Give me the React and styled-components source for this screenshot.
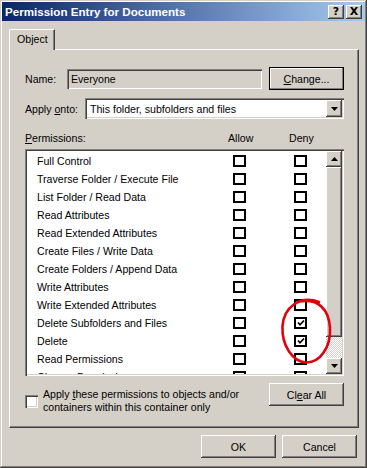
import styled, { createGlobalStyle } from 'styled-components';

const GlobalStyle = createGlobalStyle`
    html, body {
        margin: 0;
        padding: 0;
        background: #d4d0c8;
    }
    body {
        font-family: "Liberation Sans", Arial, sans-serif;
        font-size: 10.6px;
        color: #000;
    }
`;

const permissions = [
    { name: 'Full Control' },
    { name: 'Traverse Folder / Execute File' },
    { name: 'List Folder / Read Data' },
    { name: 'Read Attributes' },
    { name: 'Read Extended Attributes' },
    { name: 'Create Files / Write Data' },
    { name: 'Create Folders / Append Data' },
    { name: 'Write Attributes' },
    { name: 'Write Extended Attributes' },
    { name: 'Delete Subfolders and Files', deny: true },
    { name: 'Delete', deny: true },
    { name: 'Read Permissions' },
    { name: 'Change Permissions' },
];

const CheckMark = () => (
    <svg width="8" height="8" viewBox="0 0 8 8">
        <polyline points="1,3.5 3,5.8 7,1.5" fill="none" stroke="#000" strokeWidth="1.7" />
    </svg>
);

const Arrow = ({ down }) => (
    <svg width="7" height="4" viewBox="0 0 7 4">
        <polygon points={down ? '0,0 7,0 3.5,4' : '0,4 7,4 3.5,0'} fill="#000" />
    </svg>
);

const App = () => {
    return (
        <Window>
            <GlobalStyle />
            <TitleBar>
                <Title>Permission Entry for Documents</Title>
                <TitleButton>?</TitleButton>
                <TitleButton>X</TitleButton>
            </TitleBar>
            <Body>
                <TabStrip>
                    <Tab>Object</Tab>
                </TabStrip>
                <Panel>
                    <FieldRow>
                        <Label $width={42}>Name:</Label>
                        <ReadOnlyField>Everyone</ReadOnlyField>
                        <Button $default>
                            <u>C</u>hange...
                        </Button>
                    </FieldRow>
                    <SelectRow>
                        <Label $width={60}>
                            Apply <u>o</u>nto:
                        </Label>
                        <Select>
                            <SelectText>This folder, subfolders and files</SelectText>
                            <DropButton>
                                <Arrow down />
                            </DropButton>
                        </Select>
                    </SelectRow>
                    <HeaderRow>
                        <span>
                            <u>P</u>ermissions:
                        </span>
                        <ColumnTitle>Allow</ColumnTitle>
                        <span />
                        <ColumnTitle>Deny</ColumnTitle>
                    </HeaderRow>
                    <ListBox>
                        <Rows>
                            {permissions.map((p) => (
                                <Row key={p.name}>
                                    <span>{p.name}</span>
                                    <Box>{p.allow && <CheckMark />}</Box>
                                    <Box>{p.deny && <CheckMark />}</Box>
                                </Row>
                            ))}
                        </Rows>
                        <ScrollBar>
                            <ScrollButton>
                                <Arrow />
                            </ScrollButton>
                            <Thumb />
                            <Track />
                            <ScrollButton>
                                <Arrow down />
                            </ScrollButton>
                        </ScrollBar>
                    </ListBox>
                    <BottomRow>
                        <SunkenCheck />
                        <CheckText>
                            Apply <u>t</u>hese permissions to objects and/or
                            <br />
                            containers within this container only
                        </CheckText>
                        <Button>
                            Cl<u>e</u>ar All
                        </Button>
                    </BottomRow>
                </Panel>
                <Footer>
                    <Button>OK</Button>
                    <Button>Cancel</Button>
                </Footer>
            </Body>
            <Marker width="367" height="468" viewBox="0 0 367 468">
                <path
                    d="M 319 302 C 300 295, 284 307, 282.5 326 C 281.5 346, 293 362, 306 362.5 C 320 363, 331 347, 330 328 C 329 310, 319 298, 299 301.5"
                    fill="none"
                    stroke="#e4000a"
                    strokeWidth="2.6"
                    strokeLinecap="round"
                />
            </Marker>
        </Window>
    );
};

const raised = `
    box-shadow: inset -1px -1px #404040, inset 1px 1px #ffffff, inset -2px -2px #808080;
`;

const sunken = `
    box-shadow: inset 1px 1px #808080, inset 2px 2px #404040, inset -1px -1px #ffffff, inset -2px -2px #d4d0c8;
`;

const Window = styled.div`
    position: relative;
    width: 367px;
    height: 468px;
    box-sizing: border-box;
    padding: 2px;
    background: #d4d0c8;
    display: flex;
    flex-direction: column;
    box-shadow: inset -1px -1px #404040, inset 1px 1px #d4d0c8, inset -2px -2px #808080, inset 2px 2px #ffffff;
`;

const TitleBar = styled.div`
    height: 19px;
    display: flex;
    align-items: center;
    gap: 2px;
    padding: 0 3px 0 3px;
    background: linear-gradient(to right, #0a246a, #a6caf0);
`;

const Title = styled.div`
    flex: 1;
    color: #fff;
    font-weight: bold;
    font-size: 11.6px;
`;

const TitleButton = styled.div`
    width: 16px;
    height: 14px;
    background: #d4d0c8;
    ${raised}
    display: flex;
    align-items: center;
    justify-content: center;
    font-family: "DejaVu Sans", sans-serif;
    font-weight: bold;
    font-size: 11px;
    line-height: 1;
`;

const Body = styled.div`
    flex: 1;
    display: flex;
    flex-direction: column;
    padding: 8px 6px 0 7px;
`;

const TabStrip = styled.div`
    display: flex;
    height: 20px;
`;

const Tab = styled.div`
    position: relative;
    z-index: 1;
    width: 46px;
    height: 21px;
    box-sizing: border-box;
    padding: 0 0 2px 7px;
    display: flex;
    align-items: center;
    background: #d4d0c8;
    border-top: 1px solid #fff;
    border-left: 1px solid #fff;
    border-right: 1px solid #404040;
    border-top-left-radius: 2px;
    box-shadow: inset -1px 0 #808080;
`;

const Panel = styled.div`
    height: 379px;
    box-sizing: border-box;
    border: 1px solid;
    border-color: #fff #404040 #404040 #fff;
    box-shadow: inset -1px -1px #808080;
    padding: 17px 14px 0 15px;
    display: flex;
    flex-direction: column;
`;

const FieldRow = styled.div`
    display: flex;
    align-items: center;
    height: 23px;
`;

const Label = styled.div`
    width: ${(p) => p.$width}px;
    flex: none;
`;

const ReadOnlyField = styled.div`
    flex: 1;
    height: 20px;
    margin-right: 7px;
    padding-left: 4px;
    display: flex;
    align-items: center;
    background: #d4d0c8;
    ${sunken}
`;

const Button = styled.div`
    width: 75px;
    height: 23px;
    flex: none;
    box-sizing: border-box;
    display: flex;
    align-items: center;
    justify-content: center;
    background: #d4d0c8;
    ${(p) =>
        p.$default
            ? 'border: 1px solid #000; box-shadow: inset -1px -1px #808080, inset 1px 1px #ffffff;'
            : raised}
`;

const SelectRow = styled.div`
    display: flex;
    align-items: center;
    margin-top: 8px;
    height: 21px;
`;

const Select = styled.div`
    flex: 1;
    height: 21px;
    box-sizing: border-box;
    padding: 2px;
    display: flex;
    align-items: center;
    background: #fff;
    ${sunken}
`;

const SelectText = styled.div`
    flex: 1;
    padding-left: 3px;
`;

const DropButton = styled.div`
    width: 16px;
    height: 17px;
    display: flex;
    align-items: center;
    justify-content: center;
    background: #d4d0c8;
    ${raised}
`;

const HeaderRow = styled.div`
    display: grid;
    grid-template-columns: 203px 24px 37px 24px;
    align-items: center;
    margin-top: 12px;
    height: 14px;
`;

const ColumnTitle = styled.span`
    text-align: center;
`;

const ListBox = styled.div`
    margin-top: 4px;
    height: 227px;
    box-sizing: border-box;
    padding: 2px;
    display: flex;
    background: #fff;
    overflow: hidden;
    ${sunken}
`;

const Rows = styled.div`
    flex: 1;
    padding: 1px 0 0 10px;
    overflow: hidden;
`;

const Row = styled.div`
    display: grid;
    grid-template-columns: 196px 61px 13px;
    align-items: center;
    height: 18px;
    white-space: nowrap;
`;

const Box = styled.div`
    width: 13px;
    height: 12px;
    box-sizing: border-box;
    border: 2px solid #000;
    background: #fff;
    display: flex;
    align-items: center;
    justify-content: center;
`;

const ScrollBar = styled.div`
    width: 16px;
    display: flex;
    flex-direction: column;
`;

const ScrollButton = styled.div`
    height: 16px;
    flex: none;
    display: flex;
    align-items: center;
    justify-content: center;
    background: #d4d0c8;
    ${raised}
`;

const Thumb = styled.div`
    height: 170px;
    flex: none;
    background: #d4d0c8;
    ${raised}
`;

const Track = styled.div`
    flex: 1;
    background: repeating-conic-gradient(#ffffff 0 25%, #d4d0c8 0 50%) 0 0 / 2px 2px;
`;

const BottomRow = styled.div`
    display: flex;
    align-items: flex-start;
    margin-top: 7px;
`;

const SunkenCheck = styled.div`
    width: 13px;
    height: 13px;
    margin-top: 12px;
    flex: none;
    background: #fff;
    ${sunken}
`;

const CheckText = styled.div`
    flex: 1;
    margin: 5px 0 0 5px;
    line-height: 13px;
`;

const Footer = styled.div`
    display: flex;
    justify-content: flex-end;
    gap: 6px;
    margin-top: 7px;
    padding-right: 2px;
`;

const Marker = styled.svg`
    position: absolute;
    left: 0;
    top: 0;
    pointer-events: none;
`;

export default App;
